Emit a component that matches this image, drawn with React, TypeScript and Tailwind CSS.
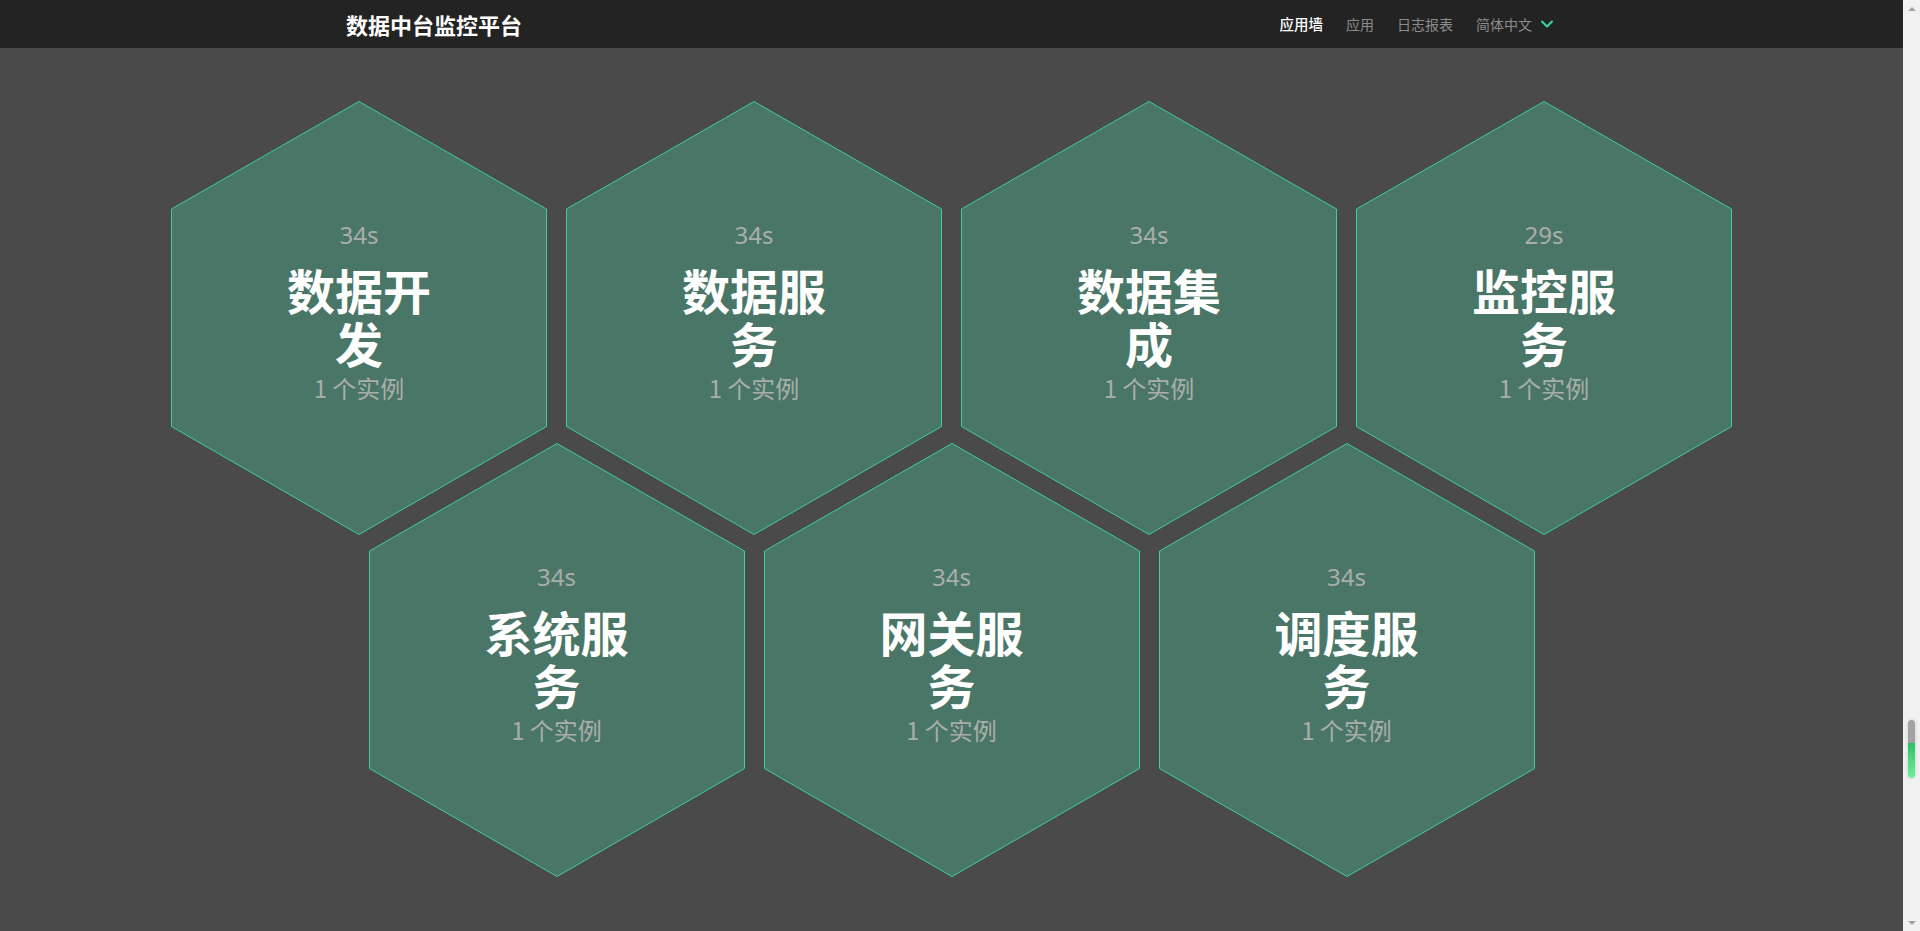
import React from 'react';
import { ChevronDown } from 'lucide-react';

type Service = { name: string; age: string; count: number };

const topRow: Service[] = [
  { name: '数据开发', age: '34s', count: 1 },
  { name: '数据服务', age: '34s', count: 1 },
  { name: '数据集成', age: '34s', count: 1 },
  { name: '监控服务', age: '29s', count: 1 },
];

const bottomRow: Service[] = [
  { name: '系统服务', age: '34s', count: 1 },
  { name: '网关服务', age: '34s', count: 1 },
  { name: '调度服务', age: '34s', count: 1 },
];

const navigation = [
  { name: '应用墙', active: true },
  { name: '应用', active: false },
  { name: '日志报表', active: false },
];

function Hexagon({ service }: { service: Service }) {
  return (
    <div className="relative w-[376px] h-[434px] shrink-0">
      {/* hex outline */}
      <svg className="absolute inset-0" width="376" height="434" viewBox="0 0 376 434">
        <polygon
          points="188,0.5 375.5,108 375.5,325.5 188,433.5 0.5,325.5 0.5,108"
          fill="#4a7667"
          stroke="#3ccf99"
          strokeWidth="1"
        />
      </svg>
      <div className="relative flex flex-col items-center pt-[120px] text-center">
        <div className="text-[24px] leading-[28px] text-[#a9aeab] font-['Noto_Sans','Noto_Sans_CJK_SC',sans-serif]">
          {service.age}
        </div>
        <div className="mt-[14px] w-[160px] text-[48px] leading-[53px] font-bold text-white font-['Noto_Sans_CJK_SC',sans-serif]">
          {service.name}
        </div>
        <div className="mt-[5px] text-[24px] leading-[28px] text-[#a9aeab] font-['Noto_Sans_CJK_SC',sans-serif]">
          {service.count} 个实例
        </div>
      </div>
    </div>
  );
}

function Scrollbar() {
  return (
    <div className="w-[17px] h-full bg-[#f1f1f1] flex flex-col items-center">
      <div className="h-[17px] flex items-center justify-center">
        <div className="w-0 h-0 border-l-[4px] border-r-[4px] border-b-[4px] border-l-transparent border-r-transparent border-b-[#a3a3a3]" />
      </div>
      <div className="flex-1 flex flex-col items-center">
        <div className="mt-[703px] w-[7px] h-[58px] rounded-full overflow-hidden flex flex-col shadow-[0_0_4px_rgba(0,0,0,0.15)]">
          <div className="h-[23px] bg-[#a3a3a3]" />
          <div className="flex-1 bg-gradient-to-b from-[#27c065] to-[#6ff09a]" />
        </div>
      </div>
      <div className="h-[17px] flex items-center justify-center">
        <div className="w-0 h-0 border-l-[4px] border-r-[4px] border-t-[4px] border-l-transparent border-r-transparent border-t-[#a3a3a3]" />
      </div>
    </div>
  );
}

export default function App() {
  return (
    <div className="h-[931px] w-full flex overflow-hidden bg-[#4a4a4a]">
      <div className="flex-1 flex flex-col">
        <header className="h-12 bg-[#232323] shrink-0">
          <div className="max-w-[1211px] h-full mx-auto flex items-center justify-between">
            <span className="text-[22px] font-bold text-white font-['Noto_Sans_CJK_SC',sans-serif]">
              数据中台监控平台
            </span>
            <nav className="flex items-center gap-[23px] text-[14px] font-['Noto_Sans_CJK_SC',sans-serif]">
              {navigation.map((item) => (
                <span
                  key={item.name}
                  className={item.active ? 'text-white font-medium text-[14.5px]' : 'text-[#8c8c8c]'}
                >
                  {item.name}
                </span>
              ))}
              <span className="flex items-center text-[#8c8c8c]">
                简体中文
                <ChevronDown className="ml-[5px] text-[#3dd6a0]" size={20} strokeWidth={2.5} />
              </span>
            </nav>
          </div>
        </header>

        <main className="flex-1 pt-[53px]">
          <div className="flex justify-center gap-[19px]">
            {topRow.map((s) => (
              <Hexagon key={s.name} service={s} />
            ))}
          </div>
          <div className="flex justify-center gap-[19px] -mt-[92px]">
            {bottomRow.map((s) => (
              <Hexagon key={s.name} service={s} />
            ))}
          </div>
        </main>
      </div>
      <Scrollbar />
    </div>
  );
}
